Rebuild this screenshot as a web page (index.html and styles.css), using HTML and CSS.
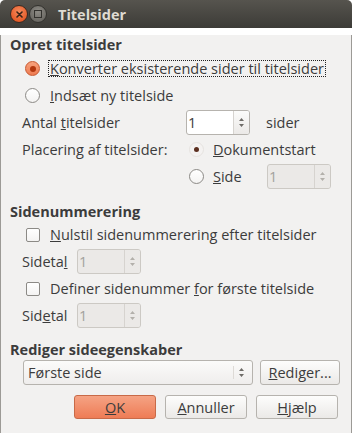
FILE: index.html
```html
<!DOCTYPE html>
<html lang="da">
<head>
  <meta charset="UTF-8">
  <title>Titelsider</title>
  <link rel="stylesheet" href="styles.css">
</head>
<body>
  <div class="window">
    <div class="titlebar">
      <span class="wbtn close">
        <svg width="7" height="7" viewBox="0 0 7 7"><path d="M1 1L6 6M6 1L1 6" stroke="#3a2418" stroke-width="1.6" stroke-linecap="round"/></svg>
      </span>
      <span class="wbtn max"><span class="sq"></span></span>
      <span class="title">Titelsider</span>
    </div>

    <div class="content">
      <h3>Opret titelsider</h3>
      <label class="row opt">
        <span class="radio on"></span>
        <span class="focus"><u>K</u>onverter eksisterende sider til titelsider</span>
      </label>
      <label class="row opt">
        <span class="radio"></span>
        <span class="txt"><u>I</u>ndsæt ny titelside</span>
      </label>

      <div class="grid">
        <div class="row lbl"><span>Antal <u>t</u>itelsider</span></div>
        <div class="row">
          <span class="spin"><span class="val">1</span><span class="arrows"><svg width="7" height="11" viewBox="0 0 7 11"><path d="M3.5 1L6 4H1Z M1 7H6L3.5 10Z" fill="currentColor"/></svg></span></span>
          <span class="unit">sider</span>
        </div>
        <div class="row lbl"><span>Placering af titelsider:</span></div>
        <div class="row">
          <span class="radio dot"></span>
          <span class="txt"><u>D</u>okumentstart</span>
        </div>
        <div class="row"></div>
        <div class="row">
          <span class="radio"></span>
          <span class="txt side"><u>S</u>ide</span>
          <span class="spin off"><span class="val">1</span><span class="arrows"><svg width="7" height="11" viewBox="0 0 7 11"><path d="M3.5 1L6 4H1Z M1 7H6L3.5 10Z" fill="currentColor"/></svg></span></span>
        </div>
      </div>

      <h3 class="sec2">Sidenummerering</h3>
      <label class="row opt">
        <span class="check"></span>
        <span class="txt"><u>N</u>ulstil sidenummerering efter titelsider</span>
      </label>
      <div class="row lbl">
        <span class="short">Sideta<u>l</u></span>
        <span class="spin off"><span class="val">1</span><span class="arrows"><svg width="7" height="11" viewBox="0 0 7 11"><path d="M3.5 1L6 4H1Z M1 7H6L3.5 10Z" fill="currentColor"/></svg></span></span>
      </div>
      <label class="row opt">
        <span class="check"></span>
        <span class="txt">Definer sidenummer <u>f</u>or første titelside</span>
      </label>
      <div class="row lbl">
        <span class="short">Sid<u>e</u>tal</span>
        <span class="spin off"><span class="val">1</span><span class="arrows"><svg width="7" height="11" viewBox="0 0 7 11"><path d="M3.5 1L6 4H1Z M1 7H6L3.5 10Z" fill="currentColor"/></svg></span></span>
      </div>

      <h3 class="sec3">Rediger sideegenskaber</h3>
      <div class="combo-row">
        <span class="combo"><span class="val">Første side</span><span class="arrows"><svg width="7" height="11" viewBox="0 0 7 11"><path d="M3.5 1L6 4H1Z M1 7H6L3.5 10Z" fill="currentColor"/></svg></span></span>
        <span class="btn edit"><span><u>R</u>ediger...</span></span>
      </div>

      <div class="actions">
        <span class="btn ok"><span><u>O</u>K</span></span>
        <span class="btn"><span><u>A</u>nnuller</span></span>
        <span class="btn"><span><u>H</u>jælp</span></span>
      </div>
    </div>
  </div>
</body>
</html>
```

FILE: styles.css
```css
body {
  margin: 0;
  background: #ffffff;
  font-family: "Open Sans", Lato, sans-serif;
  font-size: 14.5px;
  color: #3c3c3c;
}

.window {
  width: 352px;
  height: 433px;
}

.titlebar {
  height: 28px;
  display: flex;
  align-items: center;
  padding-left: 10px;
  background: linear-gradient(#56544e, #3c3b37);
  border-radius: 5px 5px 0 0;
  box-sizing: border-box;
}

.wbtn {
  width: 18px;
  height: 18px;
  border-radius: 50%;
  display: flex;
  align-items: center;
  justify-content: center;
  box-sizing: border-box;
}

.close {
  background: radial-gradient(circle at 50% 35%, #f68a5c, #df4a16);
  border: 1px solid #3a2a22;
}

.max {
  margin-left: 1px;
  background: radial-gradient(circle at 50% 35%, #8d8b85, #5f5d58);
  border: 1px solid #33322e;
}

.max .sq {
  width: 6px;
  height: 6px;
  border: 1px solid #33322e;
}

.title {
  margin-left: 11px;
  color: #dfdbd2;
  font-weight: bold;
}

.content {
  height: 405px;
  box-sizing: border-box;
  background: #f2f1f0;
  border: 1px solid #9c9a96;
  border-top: none;
  padding: 0 10px 0 9px;
}

h3 {
  margin: 7px 0 0;
  height: 20px;
  line-height: 20px;
  font-size: 14.5px;
  font-weight: bold;
}

.sec2 { margin-top: 12px; height: 19px; }
.sec3 { margin-top: 11px; }

.row {
  height: 27px;
  display: flex;
  align-items: center;
}

.opt {
  padding-left: 15px;
}

.lbl {
  padding-left: 12px;
}

.radio {
  width: 15px;
  height: 15px;
  border-radius: 50%;
  border: 1px solid #8c8a86;
  background: linear-gradient(#ffffff, #f4f3f2);
  box-sizing: border-box;
  flex-shrink: 0;
  display: flex;
  align-items: center;
  justify-content: center;
}

.radio.on {
  border-color: #c8582f;
  background: linear-gradient(#f7a27d, #ee7b51);
}

.radio.on::after {
  content: "";
  width: 6px;
  height: 6px;
  border-radius: 50%;
  background: #b3370e;
}

.radio.dot {
  border-color: #e6e3e0;
  background: #f4f2f1;
}

.radio.dot::after {
  content: "";
  width: 5px;
  height: 5px;
  border-radius: 50%;
  background: #5b2e1f;
}

.check {
  width: 14px;
  height: 14px;
  margin-left: 1px;
  border: 1px solid #8c8a86;
  border-radius: 2px;
  background: linear-gradient(#ffffff, #f4f3f2);
  box-sizing: border-box;
  flex-shrink: 0;
}

.txt {
  margin-left: 10px;
}

.focus {
  margin-left: 8px;
  padding: 0 1px;
  border: 1px dotted #222;
  line-height: 15px;
}

.grid {
  display: grid;
  grid-template-columns: 176px 1fr;
}

.grid .radio {
  margin-left: 3px;
}

.grid .txt {
  margin-left: 9px;
}

.txt.side {
  width: 54px;
}

.spin {
  width: 64px;
  height: 25px;
  display: flex;
  border: 1px solid #b6b3ae;
  border-radius: 3px;
  background: #ffffff;
  box-sizing: border-box;
  overflow: hidden;
  flex-shrink: 0;
}

.spin .val,
.combo .val {
  flex: 1;
  display: flex;
  align-items: center;
  padding-left: 1px;
}

.arrows {
  width: 15px;
  border-left: 1px solid #d6d3cf;
  background: linear-gradient(#fbfbfa, #ebe9e7);
  color: #6e6c68;
  display: flex;
  align-items: center;
  justify-content: center;
}

.spin.off {
  background: #ebe9e7;
  border-color: #ccc9c4;
  color: #a3a19d;
}

.spin.off .arrows {
  background: #ebe9e7;
  color: #b3b0ab;
}

.unit {
  margin-left: 16px;
}

.short {
  width: 55px;
}

.combo-row {
  display: flex;
  height: 25px;
  padding-left: 13px;
}

.combo {
  width: 230px;
  display: flex;
  border: 1px solid #b6b3ae;
  border-radius: 3px;
  background: linear-gradient(#fbfbfa, #efedec);
  box-sizing: border-box;
}

.combo .val {
  padding-left: 4px;
}

.combo .arrows {
  background: none;
  border-left: 1px solid #dddad6;
  margin: 5px 4px 5px 0;
  width: 14px;
}

.btn {
  display: flex;
  align-items: center;
  justify-content: center;
  border: 1px solid #b6b3ae;
  border-radius: 3px;
  background: linear-gradient(#fdfdfc, #ebe9e7);
  box-sizing: border-box;
}

.edit {
  width: 80px;
  margin-left: 7px;
}

.actions {
  display: flex;
  justify-content: flex-end;
  gap: 9px;
  margin-top: 10px;
  height: 24px;
  padding-right: 3px;
}

.actions .btn {
  width: 82px;
}

.btn.ok {
  background: linear-gradient(#f5a384, #ee7c56);
  border-color: #c86a48;
}
```
